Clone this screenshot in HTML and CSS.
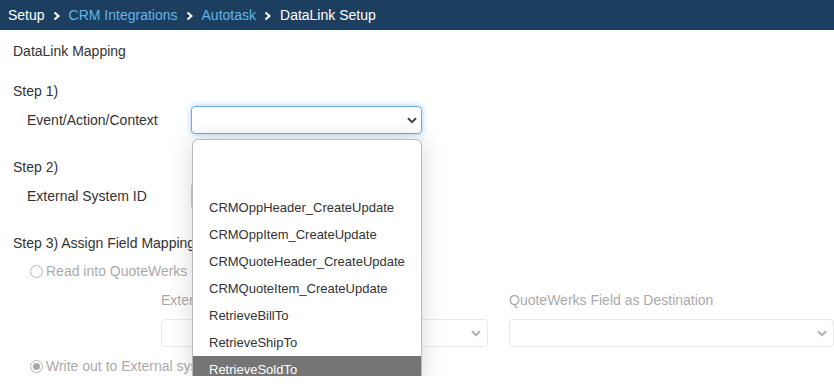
FILE: index.html
```html
<!DOCTYPE html>
<html lang="en">
<head>
<meta charset="UTF-8" />
<title>DataLink Setup</title>
<link rel="stylesheet" href="styles.css">
</head>
<body>

<div class="crumbs">
  <span class="crumb">Setup</span>
  <svg class="sep" width="8" height="10" viewBox="0 0 8 10"><path d="M1.5 1.5 L5.5 5 L1.5 8.5" fill="none" stroke="#fff" stroke-width="2"/></svg>
  <span class="crumb link">CRM Integrations</span>
  <svg class="sep" width="8" height="10" viewBox="0 0 8 10"><path d="M1.5 1.5 L5.5 5 L1.5 8.5" fill="none" stroke="#fff" stroke-width="2"/></svg>
  <span class="crumb link">Autotask</span>
  <svg class="sep" width="8" height="10" viewBox="0 0 8 10"><path d="M1.5 1.5 L5.5 5 L1.5 8.5" fill="none" stroke="#fff" stroke-width="2"/></svg>
  <span class="crumb">DataLink Setup</span>
</div>

<div class="page">
  <div class="title">DataLink Mapping</div>

  <div class="step">Step 1)</div>
  <div class="row">
    <div class="label">Event/Action/Context</div>
    <div class="select focus">
      <svg class="caret" width="10" height="7" viewBox="0 0 10 7"><path d="M1 1.2 L5 5.2 L9 1.2" fill="none" stroke="#444" stroke-width="2"/></svg>
    </div>
    <ul class="options">
      <li></li>
      <li></li>
      <li>CRMOppHeader_CreateUpdate</li>
      <li>CRMOppItem_CreateUpdate</li>
      <li>CRMQuoteHeader_CreateUpdate</li>
      <li>CRMQuoteItem_CreateUpdate</li>
      <li>RetrieveBillTo</li>
      <li>RetrieveShipTo</li>
      <li class="active">RetrieveSoldTo</li>
    </ul>
  </div>

  <div class="step gap">Step 2)</div>
  <div class="row">
    <div class="label">External System ID</div>
    <div class="select"></div>
  </div>

  <div class="step gap">Step 3) Assign Field Mapping</div>

  <div class="disabled">
    <div class="radio-row">
      <span class="radio"></span>
      <span>Read into QuoteWerks</span>
    </div>
    <div class="fields">
      <div class="field">
        <div class="field-label">External System Field as Source</div>
        <div class="select">
          <svg class="caret" width="10" height="7" viewBox="0 0 10 7"><path d="M1 1.2 L5 5.2 L9 1.2" fill="none" stroke="#444" stroke-width="2"/></svg>
        </div>
      </div>
      <div class="field">
        <div class="field-label">QuoteWerks Field as Destination</div>
        <div class="select">
          <svg class="caret" width="10" height="7" viewBox="0 0 10 7"><path d="M1 1.2 L5 5.2 L9 1.2" fill="none" stroke="#444" stroke-width="2"/></svg>
        </div>
      </div>
    </div>
    <div class="radio-row">
      <span class="radio checked"></span>
      <span>Write out to External system</span>
    </div>
  </div>
</div>

</body>
</html>
```

FILE: styles.css
```css
body {
  margin: 0;
  font-family: "Liberation Sans", Arial, sans-serif;
  font-size: 14px;
  color: #333;
  background: #fff;
  overflow: hidden;
}
.crumbs {
  height: 30px;
  background: #1c3f60;
  display: flex;
  align-items: center;
  padding-left: 8px;
  gap: 7px;
  color: #fff;
  font-size: 14px;
}
.crumb.link {
  color: #62b4e6;
}
.sep {
  margin: 1px 1px 0;
}
.page {
  padding: 0 2px 0 13px;
}
.title {
  line-height: 20px;
  margin-top: 11px;
}
.step {
  line-height: 20px;
  margin-top: 20px;
}
.step.gap {
  margin-top: 23px;
}
.row {
  display: flex;
  align-items: center;
  height: 28px;
  margin-top: 5px;
  padding-left: 14px;
  position: relative;
}
.label {
  width: 164px;
}
.select {
  box-sizing: border-box;
  width: 231px;
  height: 28px;
  border: 1px solid #ccc;
  border-radius: 4px;
  background: #fff;
  display: flex;
  align-items: center;
  justify-content: flex-end;
  padding-right: 4px;
}
.select.focus {
  border-color: #66afe9;
  box-shadow: 0 0 6px rgba(102, 175, 233, 0.6);
}
.options {
  position: absolute;
  left: 179px;
  top: 33px;
  width: 230px;
  height: 245px;
  margin: 0;
  padding: 0;
  list-style: none;
  box-sizing: border-box;
  border: 1px solid #bbb;
  border-radius: 6px;
  background: #fff;
  box-shadow: 0 1px 24px rgba(0, 0, 0, 0.16);
  overflow: hidden;
  z-index: 5;
  font-size: 13px;
}
.options li {
  height: 27px;
  line-height: 27px;
  padding-left: 16px;
}
.options li.active {
  background: #757575;
  color: #fff;
}
.disabled {
  opacity: 0.42;
}
.radio-row {
  display: flex;
  align-items: center;
  gap: 3px;
  line-height: 20px;
  margin-top: 8px;
  padding-left: 17px;
}
.radio {
  box-sizing: border-box;
  width: 13px;
  height: 13px;
  border: 1px solid #555;
  border-radius: 50%;
  background: #fff;
  position: relative;
}
.radio.checked::after {
  content: "";
  position: absolute;
  inset: 2px;
  border-radius: 50%;
  background: #333;
}
.fields {
  display: grid;
  grid-template-columns: 327px 325px;
  gap: 21px;
  padding-left: 148px;
  margin-top: 9px;
}
.field-label {
  line-height: 20px;
  white-space: nowrap;
  overflow: hidden;
}
.field .select {
  width: 100%;
  margin-top: 9px;
  padding-right: 6px;
}
.disabled .radio-row:last-child {
  margin-top: 9px;
}
```
